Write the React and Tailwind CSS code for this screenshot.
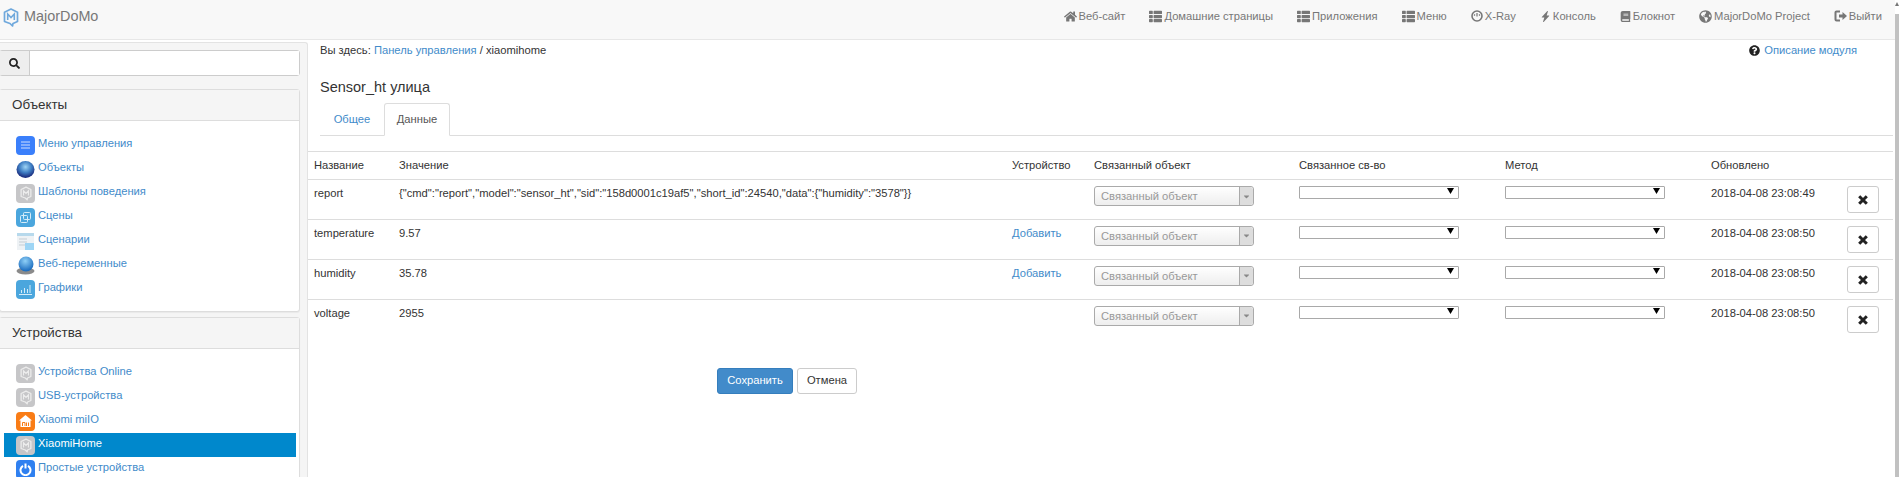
import { FaHome, FaThList, FaBook, FaGlobeAmericas, FaSearch, FaQuestionCircle, FaCaretDown } from "react-icons/fa"
import { BsLightningChargeFill } from "react-icons/bs"

const LogoMark = ({ color = "#6fa8dc", size = 16 }) => (
  <svg width={size} height={size + 3} viewBox="0 0 16 19" fill="none" className="shrink-0">
    <path d="M8 1 14.500 4.200v9.300L10 15.500 9.500 18 7 15.500 1.500 13.500V4.200z" stroke={color} strokeWidth="1.700" strokeLinejoin="round" />
    <path d="M4.700 12V6l3.300 3.500L11.300 6v6" stroke={color} strokeWidth="1.600" />
  </svg>
)

const Tile = ({ bg, children }) => (
  <span className="flex h-[19px] w-[19px] shrink-0 items-center justify-center rounded-[4px]" style={{ background: bg }}>
    {children}
  </span>
)

const GreyIcon = () => (
  <Tile bg="#c6c6c8">
    <LogoMark color="#ececec" size={12} />
  </Tile>
)

const MenuIcon = () => (
  <Tile bg="#3a7ffb">
    <svg width="9" height="8" viewBox="0 0 9 8" stroke="#cfe0ff" strokeWidth="1">
      <path d="M0 1h9M0 4h9M0 7h9" />
    </svg>
  </Tile>
)

const SphereIcon = () => (
  <svg width="19" height="19" viewBox="0 0 19 19" className="shrink-0">
    <defs>
      <radialGradient id="sphere" cx="50%" cy="35%" r="60%">
        <stop offset="0%" stopColor="#9fd4f5" />
        <stop offset="55%" stopColor="#3f7fc4" />
        <stop offset="100%" stopColor="#1c2f80" />
      </radialGradient>
    </defs>
    <ellipse cx="9.500" cy="9.500" rx="9" ry="8.500" fill="url(#sphere)" />
  </svg>
)

const ScenesIcon = () => (
  <Tile bg="#4ba6dd">
    <svg width="11" height="11" viewBox="0 0 11 11" fill="none" stroke="#d5ecf9" strokeWidth="1">
      <rect x="3.500" y="0.500" width="7" height="7" rx="1" />
      <rect x="0.500" y="3.500" width="7" height="7" rx="1" />
    </svg>
  </Tile>
)

const ScriptsIcon = () => (
  <svg width="19" height="19" viewBox="0 0 19 19" className="shrink-0">
    <rect x="1" y="1" width="17" height="17" fill="#eef2f5" />
    <rect x="1" y="1" width="17" height="3" fill="#b7d9ec" />
    <path d="M3 7h8M3 10h8M3 13h6" stroke="#c5cdd3" strokeWidth="1" />
    <rect x="9" y="11" width="9" height="7" fill="#9ed5f5" />
  </svg>
)

const WebVarIcon = () => (
  <svg width="19" height="19" viewBox="0 0 19 19" className="shrink-0">
    <defs>
      <radialGradient id="webvar" cx="45%" cy="30%" r="65%">
        <stop offset="0%" stopColor="#8fd0f7" />
        <stop offset="100%" stopColor="#1f6fc0" />
      </radialGradient>
    </defs>
    <ellipse cx="9.500" cy="15" rx="9" ry="3.500" fill="#8a8a8a" />
    <circle cx="10" cy="8" r="7.500" fill="url(#webvar)" />
  </svg>
)

const ChartIcon = () => (
  <Tile bg="#4ba6dd">
    <svg width="13" height="11" viewBox="0 0 13 11" stroke="#d5ecf9" strokeWidth="1">
      <path d="M0 10.500h13M2.500 9V6M5.500 9V4M8.500 9V5M11 9V1" />
    </svg>
  </Tile>
)

const MiHomeIcon = () => (
  <Tile bg="#f97c16">
    <svg width="13" height="12" viewBox="0 0 13 12">
      <path d="M6.500 0 13 5.500h-1.500V12h-10V5.500H0z" fill="#fff" />
      <path d="M3.500 11V7.500h2.500V11M7.500 7.500V11M9.500 7.500V11" stroke="#f97c16" strokeWidth="1" fill="none" />
    </svg>
  </Tile>
)

const PowerIcon = () => (
  <Tile bg="#2f80f0">
    <svg width="13" height="13" viewBox="0 0 13 13" fill="none" stroke="#fff" strokeWidth="2">
      <path d="M4 2.800a5 5 0 1 0 5 0M6.500 0.500v5" />
    </svg>
  </Tile>
)

const GaugeIcon = () => (
  <svg width="12" height="12" viewBox="0 0 12 12" fill="none" stroke="#777" className="shrink-0">
    <circle cx="6" cy="6" r="5" strokeWidth="1.600" />
    <path d="M3 5.500 4 4.500M9 5.500 8 4.500M6 3v3.500" strokeWidth="1.200" />
  </svg>
)

const LogoutIcon = () => (
  <svg width="13" height="12" viewBox="0 0 13 12" className="shrink-0">
    <path d="M6 1.500H2.500a1 1 0 0 0-1 1v7a1 1 0 0 0 1 1H6" fill="none" stroke="#777" strokeWidth="2" />
    <path d="M5 4.500h3.500V2L13 6l-4.500 4V7.500H5z" fill="#777" />
  </svg>
)

const RemoveIcon = () => (
  <svg width="10" height="10" viewBox="0 0 10 10" stroke="#222" strokeWidth="3">
    <path d="M1.200 1.200 8.800 8.800M8.800 1.200 1.200 8.800" />
  </svg>
)

const navItems = [
  { label: "Веб-сайт", icon: <FaHome size={13} /> },
  { label: "Домашние страницы", icon: <FaThList size={13} /> },
  { label: "Приложения", icon: <FaThList size={13} /> },
  { label: "Меню", icon: <FaThList size={13} /> },
  { label: "X-Ray", icon: <GaugeIcon /> },
  { label: "Консоль", icon: <BsLightningChargeFill size={11} /> },
  { label: "Блокнот", icon: <FaBook size={11} /> },
  { label: "MajorDoMo Project", icon: <FaGlobeAmericas size={13} /> },
  { label: "Выйти", icon: <LogoutIcon /> },
]

const objectLinks = [
  { label: "Меню управления", icon: <MenuIcon /> },
  { label: "Объекты", icon: <SphereIcon /> },
  { label: "Шаблоны поведения", icon: <GreyIcon /> },
  { label: "Сцены", icon: <ScenesIcon /> },
  { label: "Сценарии", icon: <ScriptsIcon /> },
  { label: "Веб-переменные", icon: <WebVarIcon /> },
  { label: "Графики", icon: <ChartIcon /> },
]

const deviceLinks = [
  { label: "Устройства Online", icon: <GreyIcon /> },
  { label: "USB-устройства", icon: <GreyIcon /> },
  { label: "Xiaomi miIO", icon: <MiHomeIcon /> },
  { label: "XiaomiHome", icon: <GreyIcon />, active: true },
  { label: "Простые устройства", icon: <PowerIcon /> },
]

const rows = [
  { name: "report", value: '{"cmd":"report","model":"sensor_ht","sid":"158d0001c19af5","short_id":24540,"data":{"humidity":"3578"}}', updated: "2018-04-08 23:08:49" },
  { name: "temperature", value: "9.57", add: true, updated: "2018-04-08 23:08:50" },
  { name: "humidity", value: "35.78", add: true, updated: "2018-04-08 23:08:50" },
  { name: "voltage", value: "2955", updated: "2018-04-08 23:08:50" },
]

const Panel = ({ title, links, className }) => (
  <div className={`-ml-px mr-[7px] rounded-[3px] border border-[#ddd] bg-white shadow-[0_1px_1px_rgba(0,0,0,0.05)] ${className}`}>
    <div className="flex h-[31px] items-center border-b border-[#ddd] bg-[#f5f5f5] pb-[2px] pl-[12px] text-[13.4px] text-[#333]">{title}</div>
    <ul className="pl-[4px] pr-[3px] pt-[12px] pb-[10px]">
      {links.map((link) => (
        <li
          key={link.label}
          className={`flex h-[24px] items-center gap-[3px] pl-[12px] ${link.active ? "bg-[#0088cc] text-white" : "text-[#428bca]"}`}
        >
          {link.icon}
          <a className="-mt-[3px]">{link.label}</a>
        </li>
      ))}
    </ul>
  </div>
)

const LinkedObject = () => (
  <div className="flex h-[20px] w-[160px] items-stretch rounded-[3px] border border-[#aaa] bg-gradient-to-b from-white to-[#eee] text-[#999]">
    <span className="flex-1 pl-[6px] leading-[18px]">Связанный объект</span>
    <span className="flex w-[14px] items-center justify-center rounded-r-[3px] border-l border-[#aaa] bg-[#ddd]">
      <FaCaretDown size={9} className="text-[#888]" />
    </span>
  </div>
)

const EmptySelect = () => (
  <div className="flex h-[13px] w-[160px] items-start justify-end rounded-[1px] border border-[#a9a9a9] bg-white pr-[3px]">
    <svg width="7" height="6" viewBox="0 0 7 6" className="mt-[1px] mr-[1px]">
      <path d="M0 0h7L3.500 6z" fill="#000" />
    </svg>
  </div>
)

const App = () => {
  return (
    <div className="flex h-[477px] w-[1901px] overflow-hidden bg-white font-['Liberation_Sans',Arial,sans-serif] text-[11.2px] leading-[17px] text-[#333]">
      <div className="flex min-w-0 flex-1 flex-col">
        <nav className="flex h-[40px] shrink-0 justify-between border-b border-[#e7e7e7] bg-[#f8f8f8] pr-[1px] text-[#777]">
          <div className="flex h-[34px] items-center gap-[5px] pl-[3px]">
            <LogoMark />
            <span className="-mt-[2px] text-[14.4px]">MajorDoMo</span>
          </div>
          <ul className="flex h-[32px] items-center">
            {navItems.map((item) => (
              <li key={item.label} className="flex items-center gap-[2px] px-[12px]">
                {item.icon}
                <a>{item.label}</a>
              </li>
            ))}
          </ul>
        </nav>

        <div className="flex min-h-0 flex-1">
          <aside className="mt-[2px] w-[308px] shrink-0 overflow-hidden rounded-tr-[3px] border-r border-t border-[#e3e3e3] bg-[#f5f5f5] pt-[7px]">
            <div className="-ml-px mr-[7px] flex h-[26px] rounded-[3px] border border-[#ccc] bg-white">
              <span className="flex w-[30px] items-center justify-center border-r border-[#ccc] bg-[#eee]">
                <FaSearch size={11} className="text-[#222]" />
              </span>
              <input type="text" aria-label="Поиск" className="min-w-0 flex-1 bg-white" />
            </div>
            <Panel title="Объекты" links={objectLinks} className="mt-[13px]" />
            <Panel title="Устройства" links={deviceLinks} className="mt-[5px]" />
          </aside>

          <main className="min-w-0 flex-1 pr-[2px]">
            <div className="flex h-[20px] items-center justify-between pl-[12px] pr-[36px] pt-[1px]">
              <p>
                Вы здесь: <a className="text-[#428bca]">Панель управления</a> / xiaomihome
              </p>
              <a className="flex items-center gap-[4px] text-[#428bca]">
                <FaQuestionCircle size={11} className="text-[#222]" />
                Описание модуля
              </a>
            </div>
            <h1 className="mt-[19px] pl-[12px] text-[14.5px] leading-[17px]">Sensor_ht улица</h1>

            <div className="ml-[12px] mt-[7px] flex h-[33px] border-b border-[#ddd]">
              <a className="flex h-[32px] w-[64px] items-center justify-center text-[#428bca]">Общее</a>
              <a className="flex h-[33px] w-[66px] items-center justify-center rounded-t-[3px] border border-[#ddd] border-b-white bg-white text-[#555]">Данные</a>
            </div>

            <table className="mt-[15px] w-full table-fixed border-collapse text-left">
              <colgroup>
                <col className="w-[85px]" />
                <col className="w-[612px]" />
                <col className="w-[82px]" />
                <col className="w-[206px]" />
                <col className="w-[205px]" />
                <col className="w-[206px]" />
                <col className="w-[136px]" />
                <col />
              </colgroup>
              <thead>
                <tr className="h-[28px] border-y border-[#ddd]">
                  <th className="pl-[6px] font-normal">Название</th>
                  <th className="pl-[6px] font-normal">Значение</th>
                  <th className="pl-[7px] font-normal">Устройство</th>
                  <th className="pl-[7px] font-normal">Связанный объект</th>
                  <th className="pl-[6px] font-normal">Связанное св-во</th>
                  <th className="pl-[7px] font-normal">Метод</th>
                  <th className="pl-[7px] font-normal">Обновлено</th>
                  <th />
                </tr>
              </thead>
              <tbody>
                {rows.map((row, i) => (
                  <tr key={row.name} className="h-[40px] align-top">
                    <td className={`pl-[6px] pt-[5px] ${i ? "border-t border-[#ddd]" : ""}`}>{row.name}</td>
                    <td className={`pl-[6px] pt-[5px] ${i ? "border-t border-[#ddd]" : ""}`}>{row.value}</td>
                    <td className={`pl-[7px] pt-[5px] text-[#428bca] ${i ? "border-t border-[#ddd]" : ""}`}>{row.add && <a>Добавить</a>}</td>
                    <td className="pl-[7px]">
                      {/* this column's rule sits 1px higher in the original */}
                      {i > 0 && <div className="-ml-[7px] -mt-px h-px bg-[#ddd]" />}
                      <div className="pt-[6px]">
                        <LinkedObject />
                      </div>
                    </td>
                    <td className={`pl-[6px] pt-[6px] ${i ? "border-t border-[#ddd]" : ""}`}><EmptySelect /></td>
                    <td className={`pl-[7px] pt-[6px] ${i ? "border-t border-[#ddd]" : ""}`}><EmptySelect /></td>
                    <td className={`pl-[7px] pt-[5px] ${i ? "border-t border-[#ddd]" : ""}`}>{row.updated}</td>
                    <td className={`pl-[7px] pt-[6px] ${i ? "border-t border-[#ddd]" : ""}`}>
                      <button aria-label="Удалить" className="flex h-[27px] w-[32px] items-center justify-center rounded-[3px] border border-[#ccc] bg-white">
                        <RemoveIcon />
                      </button>
                    </td>
                  </tr>
                ))}
              </tbody>
            </table>

            <div className="mt-[28px] flex gap-[4px] pl-[409px]">
              <button className="h-[26px] w-[76px] rounded-[3px] border border-[#357ebd] bg-[#428bca] text-white">Сохранить</button>
              <button className="h-[26px] w-[60px] rounded-[3px] border border-[#ccc] bg-white text-[#333]">Отмена</button>
            </div>
          </main>
        </div>
      </div>

      {/* browser scrollbar */}
      <div className="flex w-[6px] shrink-0 flex-col pr-[2px]">
        <svg width="4" height="4" viewBox="0 0 4 4" className="mt-[2px] shrink-0">
          <path d="M2 0 4 4H0z" fill="#777" />
        </svg>
        <div className="mt-[8px] flex-1 bg-[#c1c1c1]" />
      </div>
    </div>
  )
}

export default App
